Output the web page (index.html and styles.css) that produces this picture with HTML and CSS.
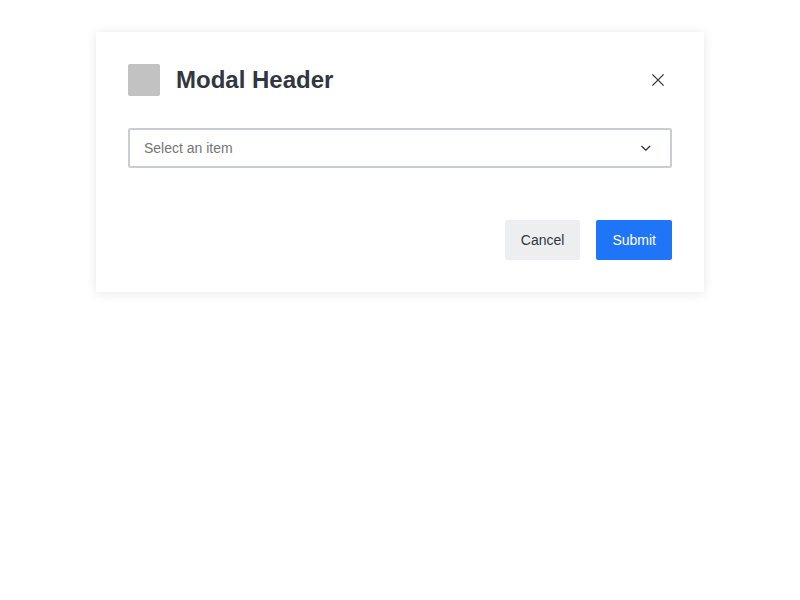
FILE: index.html
```html
<!DOCTYPE html>
<html lang="en">
<head>
<meta charset="utf-8">
<meta name="viewport" content="width=device-width, initial-scale=1">
<title>Modal</title>
<link rel="stylesheet" href="styles.css">
</head>
<body>
<section class="modal" role="dialog" aria-labelledby="modal-title">
  <header class="modal-header">
    <span class="modal-icon"></span>
    <h1 class="modal-title" id="modal-title">Modal Header</h1>
    <button class="close" type="button" aria-label="Close">
      <svg width="12" height="12" viewBox="0 0 12 12" fill="none" stroke="currentColor" stroke-width="1.3"><path d="M.4.4l11.200 11.200M11.600.4L.4 11.600"/></svg>
    </button>
  </header>
  <div class="field">
    <select class="select" aria-label="Item">
      <option>Select an item</option>
    </select>
    <svg class="chevron" width="10" height="6" viewBox="0 0 10 6" fill="none" stroke="currentColor" stroke-width="1.3"><path d="M.5 1L4.800 5.200 9.100 1"/></svg>
  </div>
  <footer class="modal-footer">
    <button class="button" type="button">Cancel</button>
    <button class="button button-primary" type="submit">Submit</button>
  </footer>
</section>
</body>
</html>
```
FILE: styles.css
```css
* {
  box-sizing: border-box;
}

body {
  margin: 0;
  padding: 32px 12%;
  background: #fff;
  color: #313640;
  font: 14px/20px "Liberation Sans", Arial, sans-serif;
}

.modal {
  padding: 32px;
  border-radius: 2px;
  background: #fff;
  box-shadow: 0 1px 12px rgba(0, 0, 0, 0.1);
}

.modal-header {
  display: flex;
  align-items: center;
  gap: 16px;
}

.modal-icon {
  width: 32px;
  height: 32px;
  border-radius: 2px;
  background: #c2c2c2;
}

.modal-title {
  flex: 1;
  margin: 0;
  font-size: 24px;
  line-height: 32px;
}

.close {
  display: grid;
  place-items: center;
  width: 28px;
  height: 28px;
  padding: 0;
  border: 0;
  background: none;
  color: inherit;
}

.close svg {
  overflow: visible;
}

.field {
  display: grid;
  align-items: center;
  margin-top: 32px;
}

.select,
.chevron {
  grid-area: 1 / 1;
}

.select {
  appearance: none;
  width: 100%;
  height: 40px;
  padding: 0 40px 0 14px;
  border: 2px solid #c9cdd1;
  border-radius: 2px;
  background: #fff;
  color: #757575;
  font: inherit;
}

.chevron {
  justify-self: end;
  margin-right: 21px;
  pointer-events: none;
}

.modal-footer {
  display: flex;
  justify-content: flex-end;
  gap: 16px;
  margin-top: 52px;
}

.button {
  height: 40px;
  padding: 0 16px;
  border: 0;
  border-radius: 2px;
  background: #edeef0;
  color: inherit;
  font: inherit;
}

.button-primary {
  background: #1f75f8;
  color: #fff;
}
```
